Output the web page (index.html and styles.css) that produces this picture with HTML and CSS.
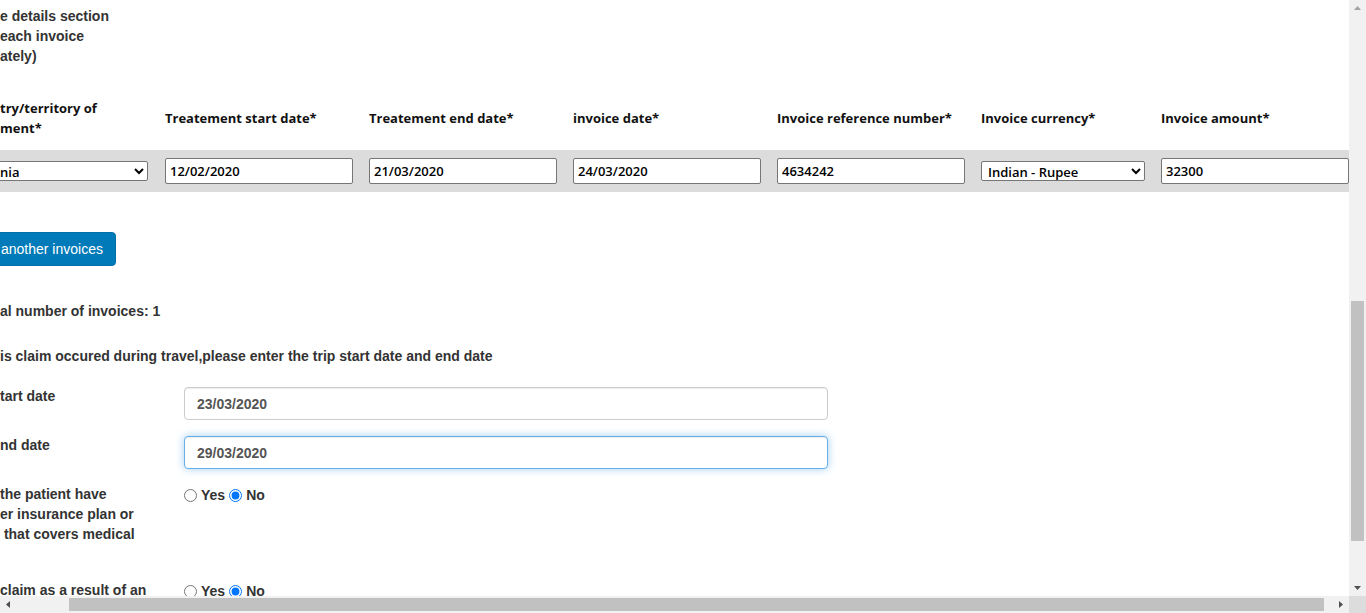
FILE: index.html
```html
<!DOCTYPE html>
<html>
<head>
<meta charset="utf-8">
<link rel="stylesheet" href="styles.css">
</head>
<body>
<div class="frame">
  <div class="viewport">
    <p class="intro">e details section<br>each invoice<br>ately)</p>

    <div class="inv-head">
      <div class="th">try/territory of<br>ment*</div>
      <div class="th">Treatement start date*</div>
      <div class="th">Treatement end date*</div>
      <div class="th">invoice date*</div>
      <div class="th">Invoice reference number*</div>
      <div class="th">Invoice currency*</div>
      <div class="th">Invoice amount*</div>
    </div>
    <div class="inv-row">
      <select class="sel sel-country"><option>nia</option></select>
      <input class="cell" type="text" value="12/02/2020">
      <input class="cell" type="text" value="21/03/2020">
      <input class="cell" type="text" value="24/03/2020">
      <input class="cell" type="text" value="4634242">
      <select class="sel sel-cur"><option>Indian - Rupee</option></select>
      <input class="cell" type="text" value="32300">
    </div>

    <button class="btn-add">another invoices</button>

    <p class="total">al number of invoices: 1</p>
    <p class="travel">is claim occured during travel,please enter the trip start date and end date</p>

    <div class="frow date-row">
      <label class="flabel">tart date</label>
      <input class="form-control" type="text" value="23/03/2020">
    </div>
    <div class="frow date-row second">
      <label class="flabel">nd date</label>
      <input class="form-control focus" type="text" value="29/03/2020">
    </div>

    <div class="frow radio-row">
      <div class="flabel">the patient have<br>er insurance plan or<br>&nbsp;that covers medical</div>
      <div class="radios">
        <label class="opt"><input type="radio" name="q1"> Yes</label>
        <label class="opt"><input type="radio" name="q1" checked> No</label>
      </div>
    </div>
    <div class="frow radio-row last">
      <div class="flabel">claim as a result of an</div>
      <div class="radios">
        <label class="opt"><input type="radio" name="q2"> Yes</label>
        <label class="opt"><input type="radio" name="q2" checked> No</label>
      </div>
    </div>
  </div>

  <div class="vbar">
    <svg class="arrow" width="17" height="17" viewBox="0 0 17 17"><polygon points="5,10 12,10 8.5,6" fill="#a3a3a3"/></svg>
    <div class="vtrack"><div class="vthumb"></div></div>
    <svg class="arrow" width="17" height="17" viewBox="0 0 17 17"><polygon points="5,7 12,7 8.5,11" fill="#505050"/></svg>
  </div>
  <div class="hbar">
    <svg class="arrow" width="17" height="17" viewBox="0 0 17 17"><polygon points="10,5 10,12 6,8.5" fill="#505050"/></svg>
    <div class="htrack"><div class="hthumb"></div></div>
    <svg class="arrow" width="17" height="17" viewBox="0 0 17 17"><polygon points="7,5 7,12 11,8.5" fill="#505050"/></svg>
  </div>
  <div class="corner"></div>
</div>
</body>
</html>
```

FILE: styles.css
```css
html, body {
  margin: 0;
  padding: 0;
  background: #fff;
}

.frame {
  display: grid;
  grid-template-columns: 1349px 17px;
  grid-template-rows: 596px 17px;
  width: 1366px;
  height: 613px;
  overflow: hidden;
}

.viewport {
  overflow: hidden;
  font-family: "Liberation Sans", Arial, sans-serif;
  font-weight: bold;
  font-size: 14px;
  color: #333;
  line-height: 20px;
}

p { margin: 0; }

.intro {
  padding-top: 6px;
}

.inv-head,
.inv-row {
  display: grid;
  grid-template-columns: 149px 188px 188px 188px 188px 164px 188px;
  column-gap: 16px;
  align-items: center;
}

.inv-head {
  margin-top: 31px;
  height: 41px;
  font-family: "Open Sans", "DejaVu Sans", sans-serif;
  font-size: 13px;
  color: #111;
  line-height: 20px;
}

.inv-row {
  margin-top: 12px;
  background: #dcdcdc;
  padding: 8px 0;
  height: 26px;
}

.cell {
  box-sizing: border-box;
  width: 188px;
  height: 26px;
  border: 1px solid #767676;
  border-radius: 2px;
  padding: 0 4px;
  font-family: "Open Sans", "DejaVu Sans", sans-serif;
  font-weight: 600;
  font-size: 13px;
  color: #000;
  background: #fff;
  outline: none;
}

.sel {
  box-sizing: border-box;
  height: 20px;
  border: 1px solid #767676;
  border-radius: 2px;
  font-family: "Open Sans", "DejaVu Sans", sans-serif;
  font-weight: 600;
  font-size: 13px;
  color: #000;
  background: #fff;
  padding: 0 2px;
}

.sel-country {
  width: 155px;
  margin-left: -7px;
}

.sel-cur {
  width: 164px;
}

.btn-add {
  display: block;
  margin-top: 40px;
  margin-left: -12px;
  height: 34px;
  padding: 6px 12px;
  background: #007ab8;
  border: 1px solid #0070a8;
  border-radius: 4px;
  color: #fff;
  font-family: "Liberation Sans", Arial, sans-serif;
  font-size: 14px;
  line-height: 20px;
  font-weight: normal;
}

.total {
  margin-top: 35px;
}

.travel {
  margin-top: 25px;
}

.frow {
  display: grid;
  grid-template-columns: 184px 644px;
  align-items: start;
}

.date-row {
  margin-top: 20px;
}

.date-row.second {
  margin-top: 15px;
}

.form-control {
  box-sizing: border-box;
  margin-top: 1px;
  width: 644px;
  height: 33px;
  padding: 6px 12px;
  border: 1px solid #ccc;
  border-radius: 4px;
  font-family: "Liberation Sans", Arial, sans-serif;
  font-weight: bold;
  font-size: 14px;
  color: #555;
  box-shadow: inset 0 1px 1px rgba(0, 0, 0, .075);
  outline: none;
}

.form-control.focus {
  border-color: #66afe9;
  box-shadow: inset 0 1px 1px rgba(0, 0, 0, .075), 0 0 8px rgba(102, 175, 233, .6);
}

.radio-row {
  margin-top: 15px;
}

.radio-row.last {
  margin-top: 36px;
}

.radios {
  display: flex;
  align-items: center;
  height: 20px;
  margin-top: 1px;
}

.opt {
  display: flex;
  align-items: center;
  color: #333;
  margin-right: 4px;
}

.opt input {
  width: 13px;
  height: 13px;
  margin: 0 4px 0 0;
}

/* scrollbars */
.vbar {
  background: #f1f1f1;
  display: flex;
  flex-direction: column;
}

.vtrack {
  flex: 1;
}

.vthumb {
  margin: 284px 2px 0 2px;
  height: 240px;
  background: #c1c1c1;
}

.hbar {
  background: #f1f1f1;
  display: flex;
}

.htrack {
  flex: 1;
  display: flex;
  align-items: center;
}

.hthumb {
  margin-left: 52px;
  width: 1255px;
  height: 13px;
  background: #c1c1c1;
}

.arrow {
  display: block;
  flex: none;
}

.corner {
  background: #dcdcdc;
}
```
